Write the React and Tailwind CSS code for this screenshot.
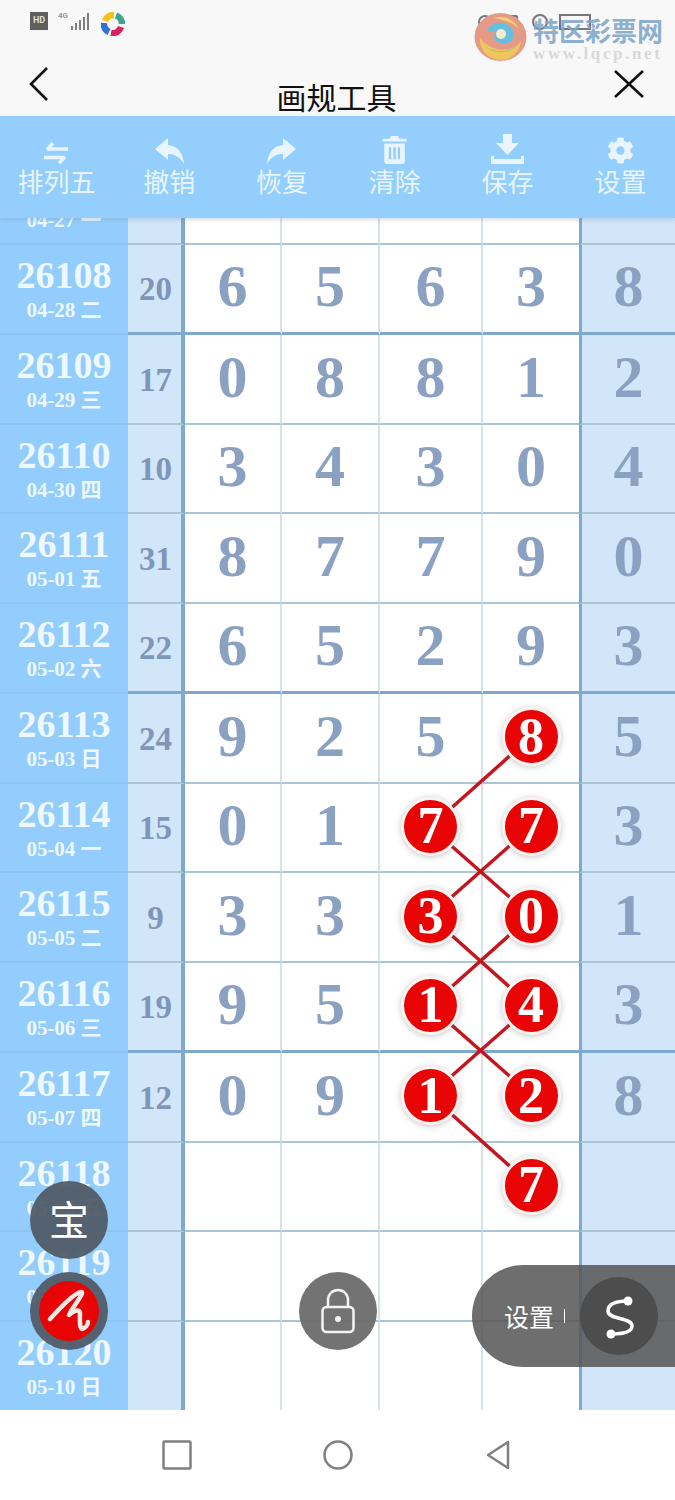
import { FaCog } from "react-icons/fa";

const serif = { fontFamily: '"Liberation Serif", "Noto Sans CJK SC", serif' };
const cjk = { fontFamily: '"Noto Sans CJK SC", sans-serif' };

// hit: which of the number columns are circled
const rows = [
  { no: "26107", date: "04-27 一", sum: "", nums: ["", "", "", "", ""] },
  { no: "26108", date: "04-28 二", sum: "20", nums: ["6", "5", "6", "3", "8"], thick: true },
  { no: "26109", date: "04-29 三", sum: "17", nums: ["0", "8", "8", "1", "2"] },
  { no: "26110", date: "04-30 四", sum: "10", nums: ["3", "4", "3", "0", "4"] },
  { no: "26111", date: "05-01 五", sum: "31", nums: ["8", "7", "7", "9", "0"] },
  { no: "26112", date: "05-02 六", sum: "22", nums: ["6", "5", "2", "9", "3"], thick: true },
  { no: "26113", date: "05-03 日", sum: "24", nums: ["9", "2", "5", "8", "5"], hit: [3] },
  { no: "26114", date: "05-04 一", sum: "15", nums: ["0", "1", "7", "7", "3"], hit: [2, 3] },
  { no: "26115", date: "05-05 二", sum: "9", nums: ["3", "3", "3", "0", "1"], hit: [2, 3] },
  { no: "26116", date: "05-06 三", sum: "19", nums: ["9", "5", "1", "4", "3"], hit: [2, 3], thick: true },
  { no: "26117", date: "05-07 四", sum: "12", nums: ["0", "9", "1", "2", "8"], hit: [2, 3] },
  { no: "26118", date: "05-08 五", sum: "", nums: ["", "", "", "7", ""], hit: [3] },
  { no: "26119", date: "05-09 六", sum: "", nums: ["", "", "", "", ""] },
  { no: "26120", date: "05-10 日", sum: "", nums: ["", "", "", "", ""] },
];

const links = [
  [531, 737, 430, 827],
  [430, 827, 531, 916],
  [531, 827, 430, 916],
  [430, 916, 531, 1006],
  [531, 916, 430, 1006],
  [430, 1006, 531, 1095],
  [531, 1006, 430, 1095],
  [430, 1095, 531, 1185],
];

const SwapIcon = () => (
  <svg width="26" height="22" viewBox="0 0 26 22" fill="none" stroke="currentColor" strokeWidth="3.500">
    <path d="M25 7H4" />
    <path d="M10 1 4 7.500" />
    <path d="M1 15.500h21" />
    <path d="M16 21l6-6" />
  </svg>
);

const UndoIcon = () => (
  <svg width="29" height="26" viewBox="0 0 29 26" fill="currentColor">
    <path d="M0 11 13 0v7c10 1 15 8 16 19-4-7-9-10-16-10v6z" />
  </svg>
);

const RedoIcon = () => (
  <svg width="29" height="26" viewBox="0 0 29 26" fill="currentColor">
    <path d="M29 11 16 0v7C6 8 1 15 0 26c4-7 9-10 16-10v6z" />
  </svg>
);

const TrashIcon = () => (
  <svg width="25" height="28" viewBox="0 0 26 30" fill="currentColor">
    <path d="M9 0h8l1 3h8v3H0V3h8z" />
    <path fillRule="evenodd" d="M2 8h22v19a3 3 0 0 1-3 3H5a3 3 0 0 1-3-3zm5 4v13h2.500V12zm4.700 0v13h2.600V12zm4.800 0v13H19V12z" />
  </svg>
);

const SaveIcon = () => (
  <svg width="33" height="30" viewBox="0 0 33 30" fill="currentColor">
    <path d="M12 0h9v9h7L16.500 21 5 9h7z" />
    <path d="M0 22h3v3h27v-3h3v8H0z" />
  </svg>
);

const tools = [
  { label: "排列五", icon: <SwapIcon /> },
  { label: "撤销", icon: <UndoIcon /> },
  { label: "恢复", icon: <RedoIcon /> },
  { label: "清除", icon: <TrashIcon /> },
  { label: "保存", icon: <SaveIcon /> },
  { label: "设置", icon: <FaCog size={27} /> },
];

const Logo = () => (
  <svg width="53" height="50" viewBox="0 0 53 50" fill="none">
    <ellipse cx="26.500" cy="25" rx="26" ry="24" fill="#e59a88" />
    <path d="M6 26a20 20 0 0 0 41 3C40 40 18 42 6 26z" fill="#eec65c" />
    <path d="M11 33c8 8 24 8 32 0-6 9-24 10-32 0z" fill="#a9c46f" />
    <path d="M13 19a14 13 0 0 1 27 3c0 8-8 11-14 9-6-2-8-7-4-11" fill="#65bfe0" />
    <path d="M20 6c8-3 20 0 25 11-6-6-14-9-25-11z" fill="#f2d26b" />
    <circle cx="27" cy="22" r="5" fill="#f6ecd0" />
  </svg>
);

const Row = ({ row }) => {
  const line = row.thick ? "border-b-[3px] border-b-[#7ea8cd]" : "border-b-2 border-b-[#a9c5d6]";
  return (
    <div className="grid h-[89.75px] shrink-0 grid-cols-[128px_57px_97px_98px_103px_96px_96px] grid-rows-[89.75px] leading-none" style={serif}>
      <div className="flex flex-col items-center border-b-2 border-b-[#8bc5f4] bg-[#93cdfd] pt-[9px] font-bold text-[#eef8ff]">
        <span className="text-[38px] leading-[42px]">{row.no}</span>
        <span className="mt-[2px] text-[21px] leading-[24px]">{row.date}</span>
      </div>
      <div className={`flex items-center justify-center border-r-4 border-r-[#7ea8cd] bg-[#d2e6f9] pl-[2px] pt-[3px] text-[33px] font-bold text-[#7f96b8] ${line}`}>
        {row.sum}
      </div>
      {row.nums.map((n, i) => {
        const hit = row.hit && row.hit.includes(i);
        const side = i === 4
          ? "border-l-[3px] border-l-[#7ea8cd] bg-[#d2e6f9]"
          : i === 3
            ? "bg-white"
            : "border-r-2 border-r-[#d6e2e9] bg-white";
        return (
          <div key={i} className={`flex items-center justify-center pb-[2px] text-[60px] font-bold text-[#8ba1c1] ${side} ${line}`}>
            {hit ? (
              <span className="relative z-[2] flex h-[59px] w-[59px] items-center justify-center rounded-full border-[3px] border-[#fdf3f0] bg-[#e80404] text-[52px] leading-none text-white shadow-[0_1px_6px_rgba(90,90,90,0.35)]">
                {n}
              </span>
            ) : (
              <span className="-mt-[2px]">{n}</span>
            )}
          </div>
        );
      })}
    </div>
  );
};

export default function App() {
  return (
    <div className="relative flex h-[1500px] w-[675px] flex-col overflow-hidden bg-white">
      {/* status bar + title */}
      <header className="relative h-[116px] shrink-0 bg-[#f8f8f8]">
        <div className="flex items-start pl-[30px] pt-[12px]">
          <span className="flex h-[18px] w-[18px] items-center justify-center bg-[#5f5f5f] text-[9px] font-bold text-[#ddd]" style={{ fontFamily: "Roboto, sans-serif" }}>
            HD
          </span>
          <div className="ml-[10px] flex h-[18px] items-end gap-[1.500px]">
            <span className="mb-[10px] mr-[1px] text-[8px] font-bold leading-none text-[#999]" style={{ fontFamily: "Roboto, sans-serif" }}>4G</span>
            <i className="block h-[4px] w-[2.500px] bg-[#808080]" />
            <i className="block h-[7px] w-[2.500px] bg-[#808080]" />
            <i className="block h-[10px] w-[2.500px] bg-[#808080]" />
            <i className="block h-[13px] w-[2.500px] bg-[#808080]" />
            <i className="block h-[17px] w-[2.500px] bg-[#808080]" />
          </div>
          <svg className="ml-[12px]" width="24" height="24" viewBox="0 0 24 24" fill="none" strokeWidth="6.500">
            <path d="M4 9 A9 9 0 0 1 13 3" stroke="#f2c21b" />
            <path d="M15 3.500 A9 9 0 0 1 21 12" stroke="#3ba58d" />
            <path d="M20 15 A9 9 0 0 1 10 21" stroke="#d8245b" />
            <path d="M8 20 A9 9 0 0 1 3 11" stroke="#2f73d8" />
          </svg>
        </div>
        {/* clock and status icons showing through the watermark */}
        <svg className="absolute left-[476px] top-[12px]" width="120" height="20" viewBox="0 0 120 20" fill="none" stroke="#777" strokeWidth="2">
          <circle cx="9" cy="10" r="6" />
          <rect x="31" y="4" width="10" height="13" rx="1" />
          <circle cx="64" cy="10" r="7" />
          <rect x="84" y="3" width="30" height="14" />
        </svg>
        <div className="absolute left-[474px] top-[12px] flex">
          <Logo />
          <div className="ml-[6px] mt-[4px] flex flex-col">
            <span className="text-[26px] font-bold leading-[28px] text-[#7ea6c8]/90" style={cjk}>特区彩票网</span>
            <span className="mt-[1px] text-[17px] font-bold leading-[18px] tracking-[2.600px] text-[#d8d8d8]" style={{ fontFamily: '"Liberation Serif", serif' }}>www.lqcp.net</span>
          </div>
        </div>
        <div className="absolute inset-x-0 top-[66px] grid grid-cols-[1fr_auto_1fr] items-start pl-[28px] pr-[30px]">
          <svg width="22" height="36" viewBox="0 0 22 36" fill="none" stroke="#111" strokeWidth="2.600">
            <path d="M19 2 3 18l16 16" />
          </svg>
          <span className="mt-[10px] text-[30px] leading-[40px] text-[#111]" style={cjk}>画规工具</span>
          <svg className="mt-[3px] justify-self-end" width="32" height="30" viewBox="0 0 32 30" fill="none" stroke="#111" strokeWidth="2.600">
            <path d="M2 2l28 26M30 2 2 28" />
          </svg>
        </div>
      </header>

      {/* toolbar */}
      <nav className="relative z-10 grid h-[102px] shrink-0 grid-cols-[repeat(6,112.800px)] bg-[#93cefd] shadow-[0_2px_4px_rgba(120,150,170,0.3)]">
        {tools.map((t) => (
          <div key={t.label} className="flex flex-col items-center text-[#e9f5fe]" style={cjk}>
            <div className="flex h-[48px] items-end justify-center">{t.icon}</div>
            <span className="mt-[-1px] text-[26px] leading-[36px]">{t.label}</span>
          </div>
        ))}
      </nav>

      {/* number table */}
      <main className="h-[1192px] shrink-0 overflow-hidden">
        <div className="-mt-[62.750px]">
          {rows.map((r) => (
            <Row key={r.no} row={r} />
          ))}
        </div>
      </main>

      {/* bottom nav */}
      <footer className="flex h-[90px] shrink-0 items-center justify-center gap-[131px] bg-white pr-[4px]">
        <svg width="30" height="30" viewBox="0 0 30 30" fill="none" stroke="#808080" strokeWidth="2.500">
          <rect x="1.500" y="1.500" width="27" height="27" rx="1" />
        </svg>
        <svg width="30" height="30" viewBox="0 0 30 30" fill="none" stroke="#808080" strokeWidth="2.500">
          <circle cx="15" cy="15" r="13.500" />
        </svg>
        <svg className="ml-[2px]" width="24" height="30" viewBox="0 0 24 30" fill="none" stroke="#808080" strokeWidth="2.500" strokeLinejoin="round">
          <path d="M22 2 2 15l20 13z" />
        </svg>
      </footer>

      {/* red link lines between circled numbers */}
      <svg className="pointer-events-none absolute left-0 top-0 z-[1]" width="675" height="1500">
        {links.map((l, i) => (
          <line key={i} x1={l[0]} y1={l[1]} x2={l[2]} y2={l[3]} stroke="#c4161e" strokeWidth="3.500" />
        ))}
      </svg>

      {/* floating buttons */}
      <div className="absolute left-[30px] top-[1181px] z-20 flex h-[78px] w-[78px] items-center justify-center rounded-full bg-[#505c68]/95 pb-[5px] text-[40px] text-white" style={cjk}>
        宝
      </div>
      <div className="absolute left-[30px] top-[1272px] z-20 flex h-[78px] w-[78px] items-center justify-center rounded-full bg-[#505c68]/95">
        <svg width="60" height="60" viewBox="0 0 60 60">
          <circle cx="30" cy="30" r="30" fill="#e80404" />
          <path d="M11 38C20 28 35 12 42 11 47 11 33 26 30 34 36 29 40 28 41 32 41 38 40 46 43 48 46 47 49 44 49 41" fill="none" stroke="#fbe9e4" strokeWidth="4.500" strokeLinecap="round" strokeLinejoin="round" />
        </svg>
      </div>
      <div className="absolute left-[299px] top-[1272px] z-20 flex h-[78px] w-[78px] items-center justify-center rounded-full bg-[#6b6b6b]/95">
        <svg width="34" height="46" viewBox="0 0 34 46" fill="none" stroke="#f4f4f4" strokeWidth="2.500">
          <path d="M7 20v-8a10 10 0 0 1 20 0v8" />
          <rect x="1.500" y="19" width="31" height="25" rx="4" />
          <circle cx="17" cy="31" r="3" fill="#f4f4f4" stroke="none" />
        </svg>
      </div>
      <div className="absolute left-[472px] top-[1265px] z-20 flex h-[102px] w-[203px] items-center rounded-l-[51px] bg-[#555555]/85 pl-[32px]">
        <span className="text-[25px] leading-none text-white" style={cjk}>设置</span>
        <i className="ml-[10px] block h-[14px] w-[1px] bg-white" />
        <div className="ml-[15px] flex h-[78px] w-[78px] items-center justify-center rounded-full bg-[#4d4d4d]">
          <svg width="34" height="48" viewBox="0 0 34 48" fill="none" stroke="#fff" strokeWidth="3.500">
            <path d="M26 9C14 9 6 12 6 19 6 28 30 25 30 34 30 41 18 42 9 42" />
            <circle cx="26" cy="9" r="4.500" fill="#fff" stroke="none" />
            <circle cx="9" cy="42" r="4.500" fill="#fff" stroke="none" />
          </svg>
        </div>
      </div>
    </div>
  );
}
